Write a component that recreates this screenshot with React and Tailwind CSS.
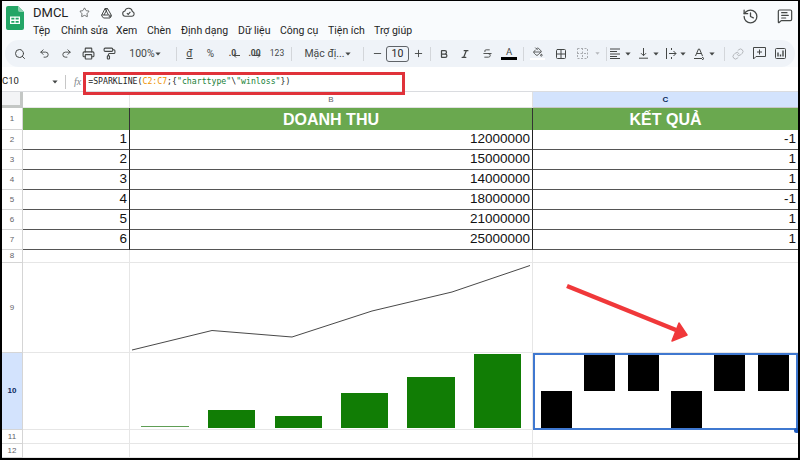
import { Search, Undo2, Redo2, Printer, PaintRoller, Minus, Plus, Bold, Italic, Strikethrough, PaintBucket, Grid2x2, Link, History, MessageSquareText, Star } from "lucide-react";

const menus = [
  { label: "Tệp", cls: "w-[28px]" },
  { label: "Chỉnh sửa", cls: "w-[55px]" },
  { label: "Xem", cls: "w-[31px]" },
  { label: "Chèn", cls: "w-[34px]" },
  { label: "Định dạng", cls: "w-[57px]" },
  { label: "Dữ liệu", cls: "w-[42px]" },
  { label: "Công cụ", cls: "w-[48px]" },
  { label: "Tiện ích", cls: "w-[46px]" },
  { label: "Trợ giúp", cls: "w-[50px]" },
];

const rows = [
  [1, 12000000, -1],
  [2, 15000000, 1],
  [3, 14000000, 1],
  [4, 18000000, -1],
  [5, 21000000, 1],
  [6, 25000000, 1],
];

const greenBars = [
  { x: 11, y: 73, w: 48, h: 1, fill: "#5f9e55" },
  { x: 78, y: 57, w: 47, h: 18 },
  { x: 145, y: 63, w: 47, h: 12 },
  { x: 211, y: 40, w: 47, h: 35 },
  { x: 277, y: 24, w: 48, h: 51 },
  { x: 344, y: 1, w: 47, h: 74 },
];

const winLossBars = [
  { x: 8, y: 38 },
  { x: 51, y: 1 },
  { x: 95, y: 1 },
  { x: 138, y: 38 },
  { x: 181, y: 1 },
  { x: 225, y: 1 },
];

const Caret = () => (
  <svg width="6" height="4" viewBox="0 0 8 5" className="shrink-0">
    <path d="M0.5 0.5h7L4 4.5z" fill="#444746" />
  </svg>
);

const Sep = ({ className }) => (
  <div className={`flex justify-center ${className}`}>
    <div className="w-px h-[14px] bg-[#d3d6da]" />
  </div>
);

const Tool = ({ className, children }) => (
  <div className={`flex items-center justify-center shrink-0 text-[#444746] ${className}`}>{children}</div>
);

const SheetsLogo = () => (
  <svg width="18" height="24" viewBox="0 0 18 24">
    <path d="M2 0h10l6 6v16a2 2 0 0 1-2 2H2a2 2 0 0 1-2-2V2a2 2 0 0 1 2-2z" fill="#23a566" />
    <path d="M12 0l6 6h-4a2 2 0 0 1-2-2z" fill="#8ed1b1" />
    <path d="M4 10.5h10v7.5H4z M5.3 11.8v1.8h3.1v-1.8z M9.6 11.8v1.8h3.1v-1.8z M5.3 14.9v1.8h3.1v-1.8z M9.6 14.9v1.8h3.1v-1.8z" fill="#fff" fillRule="evenodd" />
  </svg>
);

const RowHead = ({ children, active, className = "" }) => (
  <div className={`flex items-center justify-center border-r border-b border-[#d5d5d5] text-[8px] font-['Liberation_Sans',sans-serif] ${active ? "bg-[#d3e3fd] text-[#0b2a5c] font-bold" : "bg-white text-[#5f6368]"} ${className}`}>
    {children}
  </div>
);

const DataCell = ({ children, className = "" }) => (
  <div className={`flex items-center justify-end pr-[2px] border-b border-r border-[#555] text-[13.5px] text-[#111] ${className}`}>
    {children}
  </div>
);

const Blank = ({ className = "" }) => <div className={`border-b border-r border-[#e6e6e6] ${className}`} />;

export default function App() {
  return (
    <div className="relative w-[800px] h-[460px] overflow-hidden bg-black pt-px px-[2px] pb-[2px] font-['Roboto',sans-serif]">
      <div className="w-full h-full flex flex-col bg-white overflow-hidden">
        {/* title + menu */}
        <div className="h-[39px] bg-[#f9fbfd] flex shrink-0 pl-[4px] pt-[5px]">
          <SheetsLogo />
          <div className="ml-[9px] flex-1 flex flex-col">
            <div className="flex items-center h-[15px] mt-[-1px]">
              <span className="text-[13px] leading-none text-[#1f1f1f] w-[46px]">DMCL</span>
              <Star size={11} strokeWidth={1.6} className="text-[#444746]" />
              <svg width="13" height="12" viewBox="0 0 24 24" fill="none" stroke="#444746" strokeWidth="2" className="ml-[10px]">
                <path d="M9 3h5l8 14-3 5H6l-4-5z M9 3l7 13H2 M14 3l-7 13" />
                <path d="M19 15v6M16 18h6" />
              </svg>
              <svg width="13" height="11" viewBox="0 0 24 20" fill="none" stroke="#444746" strokeWidth="2" className="ml-[9px]">
                <path d="M6 17a5 5 0 0 1-.6-9.9A7 7 0 0 1 19 8a4.6 4.6 0 0 1-.5 9z" />
                <path d="M9 11l2.5 2.5L15.5 9" />
              </svg>
            </div>
            <div className="flex items-center mt-[4px] h-[14px] text-[10.5px] text-[#1f1f1f] leading-none">
              {menus.map((m) => (
                <span key={m.label} className={`${m.cls} shrink-0 whitespace-nowrap`}>{m.label}</span>
              ))}
            </div>
          </div>
          <div className="flex items-start pt-[2px] pr-[5px] gap-[18px] text-[#444746]">
            <History size={17} strokeWidth={1.8} />
            <MessageSquareText size={16} strokeWidth={1.8} />
          </div>
        </div>

        {/* toolbar */}
        <div className="h-[27px] bg-[#f9fbfd] shrink-0 px-[3px]">
          <div className="h-full rounded-[14px] bg-[#eff3f8] flex items-center pl-[5px] text-[#444746]">
            <Tool className="w-[20px]"><Search size={12} /></Tool>
            <div className="w-[3px]" />
            <Tool className="w-[22px]"><Undo2 size={11} /></Tool>
            <Tool className="w-[22px]"><Redo2 size={11} /></Tool>
            <Tool className="w-[22px]"><Printer size={13} /></Tool>
            <Tool className="w-[21px]"><PaintRoller size={13} /></Tool>
            <Tool className="w-[52px] pl-[5px] pr-[7px] justify-between">
              <span className="text-[10.5px]">100%</span>
              <Caret />
            </Tool>
            <Sep className="w-[8px]" />
            <Tool className="w-[19px] text-[10.5px]"><span className="underline">đ</span></Tool>
            <Tool className="w-[23px] text-[10px] text-[#6a6d70]">%</Tool>
            <Tool className="w-[21px] text-[8.5px] font-bold relative">
              .0
              <svg className="absolute left-[11px] top-[6px]" width="7" height="5" viewBox="0 0 7 5" fill="none" stroke="#444746"><path d="M7 2.5H1M3 .5L1 2.5l2 2" /></svg>
            </Tool>
            <Tool className="w-[23px] text-[8.5px] font-bold relative">
              .00
              <svg className="absolute left-[11px] top-[6px]" width="7" height="5" viewBox="0 0 7 5" fill="none" stroke="#444746"><path d="M0 2.5h6M4 .5l2 2-2 2" /></svg>
            </Tool>
            <Tool className="w-[22px] text-[8.5px]">123</Tool>
            <Sep className="w-[6px]" />
            <Tool className="w-[64px] pl-[8px] pr-[5px] justify-between">
              <span className="text-[10.5px] whitespace-nowrap">Mặc đị...</span>
              <Caret />
            </Tool>
            <Sep className="w-[10px]" />
            <Tool className="w-[18px]"><Minus size={11} /></Tool>
            <div className="w-[23px] h-[16px] flex items-center justify-center border border-[#5f6368] rounded-[3px] text-[10.5px] text-[#1f1f1f]">10</div>
            <Tool className="w-[18px]"><Plus size={11} /></Tool>
            <Sep className="w-[6px]" />
            <Tool className="w-[21px]"><Bold size={10} strokeWidth={3} /></Tool>
            <Tool className="w-[22px]"><Italic size={10} strokeWidth={3} /></Tool>
            <Tool className="w-[22px]"><Strikethrough size={11} /></Tool>
            <Tool className="w-[22px] flex-col leading-none">
              <span className="text-[9.5px] leading-[10px]">A</span>
              <div className="w-[16px] h-[2.5px] bg-black" />
            </Tool>
            <Sep className="w-[6px]" />
            <Tool className="w-[23px] flex-col">
              <PaintBucket size={10} />
              <div className="w-[15px] h-[2px] bg-white mt-px" />
            </Tool>
            <Tool className="w-[24px]"><Grid2x2 size={12} /></Tool>
            <Tool className="w-[19px]">
              <svg width="11" height="11" viewBox="0 0 11 11" fill="none" stroke="#a8abaf" strokeWidth="1" strokeDasharray="2 1.5">
                <rect x="0.5" y="0.5" width="10" height="10" />
                <path d="M5.5 0v11M0 5.5h11" />
              </svg>
            </Tool>
            <Tool className="w-[10px]"><svg width="5" height="3" viewBox="0 0 8 5"><path d="M0.5 0.5h7L4 4.5z" fill="#b4b7bb" /></svg></Tool>
            <Sep className="w-[8px]" />
            <Tool className="w-[28px] gap-[4px] justify-start">
              <svg width="11" height="11" viewBox="0 0 11 11" stroke="#444746"><path d="M0 1h10M0 3.5h7M0 6h10M0 8.5h7" /><path d="M0 10.5h10" /></svg>
              <Caret />
            </Tool>
            <Tool className="w-[28px] gap-[4px] justify-start">
              <svg width="11" height="11" viewBox="0 0 11 11" fill="none" stroke="#444746"><path d="M5.5 0v7.5M3 5.2l2.5 2.5L8 5.2M1 10.2h9" /></svg>
              <Caret />
            </Tool>
            <Tool className="w-[28px] gap-[3px] justify-start">
              <svg width="11" height="11" viewBox="0 0 11 11" fill="none" stroke="#444746"><path d="M.5 0v11M10 5.5H3M7.5 3L10 5.5 7.5 8M5.5 0v2M5.5 9v2" /></svg>
              <Caret />
            </Tool>
            <Tool className="w-[28px] gap-[4px] justify-start">
              <svg width="11" height="12" viewBox="0 0 11 12" fill="none" stroke="#444746"><path d="M1.5 8L4.5 1h1L8.5 8M3 5.5h4M0 10.5h8M8 9l2 1.5L8 12" /></svg>
              <Caret />
            </Tool>
            <Sep className="w-[4px]" />
            <Tool className="w-[23px]"><Link size={12} className="text-[#b4b7bb]" /></Tool>
            <Tool className="w-[20px]">
              <svg width="13" height="13" viewBox="0 0 13 13" fill="none" stroke="#444746"><path d="M.5.5h12v9H3L.5 12z" /><path d="M6.5 2.5v5M4 5h5" /></svg>
            </Tool>
            <Tool className="w-[22px]">
              <svg width="11" height="11" viewBox="0 0 11 11" fill="none" stroke="#444746"><rect x=".5" y=".5" width="10" height="10" rx="1" /><path d="M3 8.5v-4M5.5 8.5v-2M8 8.5v-6" strokeWidth="1.4" /></svg>
            </Tool>
          </div>
        </div>

        {/* formula bar */}
        <div className="h-[25px] bg-white flex items-center shrink-0 pt-[5px] border-b border-[#dadce0] text-[#444746]">
          <span className="text-[9.5px] w-[50px] text-[#1f1f1f]">C10</span>
          <Caret />
          <div className="w-px h-[14px] bg-[#c7c7c7] ml-[7px]" />
          <span className="ml-[8px] text-[10px] italic text-[#80868b] font-['Liberation_Serif',serif]">fx</span>
          <span className="ml-[7px] text-[8.2px] text-[#1f1f1f] font-['DejaVu_Sans_Mono',monospace] whitespace-nowrap">
            =SPARKLINE(<span className="text-[#f09300]">C2:C7</span>;{"{"}<span className="text-[#188038]">"charttype"</span>\<span className="text-[#188038]">"winloss"</span>{"})"}
          </span>
        </div>

        {/* sheet */}
        <div className="grid grid-cols-[21px_107px_403px_265px] grid-rows-[16px_22px_20px_20px_20px_20px_20px_20px_13px_90px_77px_14px_14px] font-['Liberation_Sans',sans-serif]">
          <div className="bg-[#f3f4f6] border-r-[3px] border-b-[3px] border-[#c4c7c5]" />
          <Blank className="border-[#e1e1e1]" />
          <div className="flex items-center justify-center border-r border-b border-[#e1e1e1] text-[8px] text-[#5f6368]">B</div>
          <div className="flex items-center justify-center border-b border-[#c7c7c7] bg-[#d3e3fd] text-[8px] font-bold text-[#0b2a5c]">C</div>

          <RowHead>1</RowHead>
          <div className="bg-[#6aa84f] border-r border-[#333]" />
          <div className="bg-[#6aa84f] border-r border-[#333] flex items-center justify-center text-[16px] pt-px font-bold text-white">DOANH THU</div>
          <div className="bg-[#6aa84f] flex items-center justify-center text-[16px] pt-px font-bold text-white">KẾT QUẢ</div>

          {rows.map((r, i) => (
            <div key={r[0]} className="contents">
              <RowHead>{i + 2}</RowHead>
              <DataCell className="border-r-[#222]">{r[0]}</DataCell>
              <DataCell className="border-r-[#222]">{r[1]}</DataCell>
              <DataCell className="border-r-0">{r[2]}</DataCell>
            </div>
          ))}

          <RowHead>8</RowHead>
          <Blank />
          <Blank />
          <Blank className="border-r-0" />

          <RowHead>9</RowHead>
          <Blank />
          <div className="border-b border-r border-[#e6e6e6]">
            <svg width="402" height="89" viewBox="0 0 402 89">
              <polyline points="2,87 82,67.5 162,74 242,48 322,29 400,2.5" fill="none" stroke="#333" strokeWidth="0.9" />
            </svg>
          </div>
          <Blank className="border-r-0" />

          <RowHead active>10</RowHead>
          <Blank />
          <div className="border-b border-r border-[#e6e6e6]">
            <svg width="402" height="76" viewBox="0 0 402 76">
              {greenBars.map((b) => (
                <rect key={b.x} x={b.x} y={b.y} width={b.w} height={b.h} fill={b.fill || "#117d05"} />
              ))}
            </svg>
          </div>
          <div className="relative">
            <svg width="265" height="77" viewBox="0 0 265 77" className="block">
              {winLossBars.map((b) => (
                <rect key={b.x} x={b.x} y={b.y} width="31" height="37" fill="#000" />
              ))}
            </svg>
            <div className="absolute inset-0 border-2 border-[#3f78d0]" />
            <div className="absolute right-[-1px] bottom-[-3px] w-[5px] h-[5px] rounded-full bg-[#1f5bbf]" />
          </div>

          <RowHead>11</RowHead>
          <Blank />
          <Blank />
          <Blank className="border-r-0" />

          <RowHead>12</RowHead>
          <Blank />
          <Blank />
          <Blank className="border-r-0" />
        </div>
      </div>

      {/* annotations drawn over the screenshot */}
      <div className="absolute left-[83px] top-[72px] w-[322px] h-[23px] border-[3px] border-[#e0323a]" />
      <svg className="absolute left-[560px] top-[280px]" width="135" height="70" viewBox="0 0 135 70">
        <path d="M7 6L116 50" stroke="#f0383a" strokeWidth="4.5" />
        <path d="M119 43L112 61L127 55z" fill="#f0383a" stroke="#f0383a" strokeLinejoin="round" strokeWidth="1.5" />
      </svg>
    </div>
  );
}
